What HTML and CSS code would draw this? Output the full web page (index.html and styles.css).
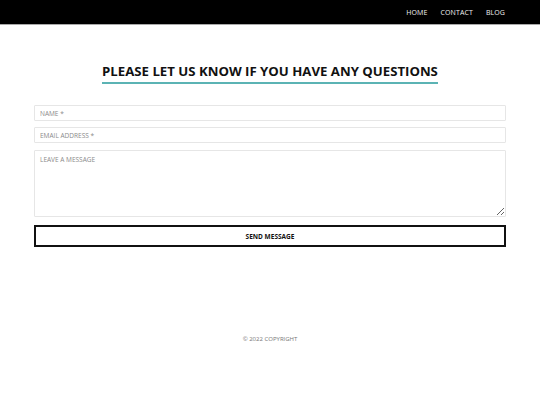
FILE: index.html
```
<!DOCTYPE html>
<html>
<head>
<meta charset="utf-8">
<link rel="stylesheet" href="styles.css">
</head>
<body>
<header class="topbar">
  <nav class="nav">
    <a class="nav-link">HOME</a>
    <a class="nav-link">CONTACT</a>
    <a class="nav-link">BLOG</a>
  </nav>
</header>
<main class="content">
  <h1 class="title">PLEASE LET US KNOW IF YOU HAVE ANY QUESTIONS</h1>
  <form class="form">
    <input class="field" type="text" placeholder="NAME *">
    <input class="field" type="text" placeholder="EMAIL ADDRESS *">
    <textarea class="field area" placeholder="LEAVE A MESSAGE"></textarea>
    <button class="send" type="button">SEND MESSAGE</button>
  </form>
</main>
<footer class="footer">© 2022 COPYRIGHT</footer>
</body>
</html>
```
FILE: styles.css
```
* { box-sizing: border-box; }
html, body { margin: 0; padding: 0; background: #fff; }
body { font-family: "Open Sans", "DejaVu Sans", sans-serif; color: #111; }
.topbar {
  height: 25px;
  background: #000;
  border-bottom: 1px solid #a9a9a9;
  display: flex;
  justify-content: flex-end;
  align-items: center;
  padding-right: 35px;
}
.nav { display: flex; gap: 13px; }
.nav-link { color: #f2f2f2; font-size: 7px; letter-spacing: 0.1px; }
.content { padding: 0 34px 0 34px; display: flex; flex-direction: column; align-items: center; }
.title {
  margin: 37px 0 0 0;
  font-size: 13.2px;
  font-weight: 700;
  line-height: 18px;
  padding-bottom: 2px;
  border-bottom: 2px solid #5bb3b4;
  color: #111;
}
.form { width: 100%; margin-top: 21px; display: flex; flex-direction: column; gap: 6px; }
.field {
  display: block;
  width: 100%;
  height: 16px;
  border: 1px solid #e6e6e6;
  border-radius: 1px;
  padding: 0 5px;
  font-family: inherit;
  font-size: 6.5px;
  color: #333;
  background: #fff;
  outline: none;
}
.field::placeholder { color: #8a8a8a; }
.area { height: 67px; margin-top: 1px; padding-top: 4px; resize: vertical; }
.send {
  margin-top: 2px;
  height: 22px;
  border: 2px solid #111;
  background: #fff;
  font-family: inherit;
  font-size: 6.5px;
  font-weight: 700;
  color: #111;
}
.footer { text-align: center; margin-top: 88px; font-size: 6px; color: #777; }
```
